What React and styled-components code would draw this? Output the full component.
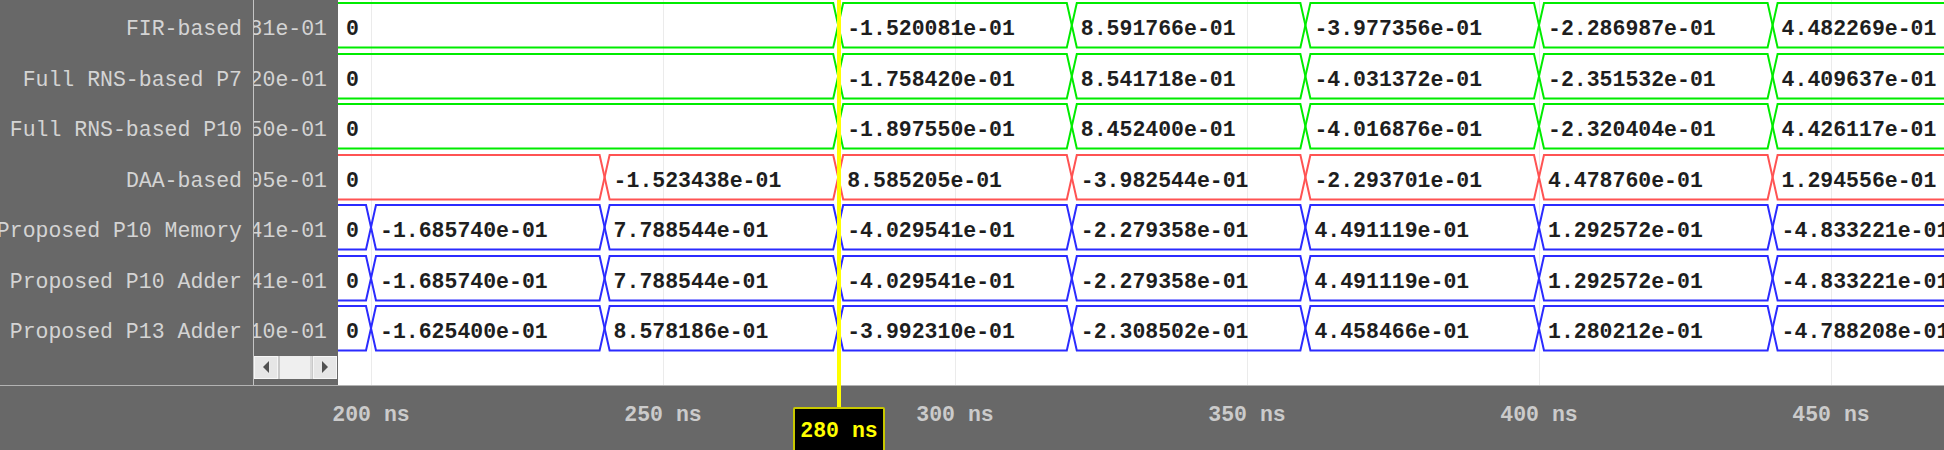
import styled, { createGlobalStyle } from "styled-components";

const PX_PER_NS = 5.84;
const T0 = 200; // ns of the first grid line
const T0_X = 33; // x of 200 ns inside the wave pane
const WAVE_LEFT = 338;
const ROW_H = 50.5;
const BUS_TOP = 1;
const BUS_BOTTOM = 45.5;
const HALF = 5;
const STEP = 40;
const CURSOR_T = 280;

const toX = (t) => T0_X + (t - T0) * PX_PER_NS;

const COLORS = {
  green: "#00ec00",
  red: "#ff5353",
  blue: "#2b2bff",
};

const signals = [
  {
    name: "FIR-based",
    color: "green",
    start: 280,
    values: ["-1.520081e-01", "8.591766e-01", "-3.977356e-01", "-2.286987e-01", "4.482269e-01"],
  },
  {
    name: "Full RNS-based P7",
    color: "green",
    start: 280,
    values: ["-1.758420e-01", "8.541718e-01", "-4.031372e-01", "-2.351532e-01", "4.409637e-01"],
  },
  {
    name: "Full RNS-based P10",
    color: "green",
    start: 280,
    values: ["-1.897550e-01", "8.452400e-01", "-4.016876e-01", "-2.320404e-01", "4.426117e-01"],
  },
  {
    name: "DAA-based",
    color: "red",
    start: 240,
    values: ["-1.523438e-01", "8.585205e-01", "-3.982544e-01", "-2.293701e-01", "4.478760e-01", "1.294556e-01"],
  },
  {
    name: "Proposed P10 Memory",
    color: "blue",
    start: 200,
    values: ["-1.685740e-01", "7.788544e-01", "-4.029541e-01", "-2.279358e-01", "4.491119e-01", "1.292572e-01", "-4.833221e-01"],
  },
  {
    name: "Proposed P10 Adder",
    color: "blue",
    start: 200,
    values: ["-1.685740e-01", "7.788544e-01", "-4.029541e-01", "-2.279358e-01", "4.491119e-01", "1.292572e-01", "-4.833221e-01"],
  },
  {
    name: "Proposed P13 Adder",
    color: "blue",
    start: 200,
    values: ["-1.625400e-01", "8.578186e-01", "-3.992310e-01", "-2.308502e-01", "4.458466e-01", "1.280212e-01", "-4.788208e-01"],
  },
];

const valueAt = (sig, t) => {
  if (t < sig.start) return "0";
  const i = Math.min(Math.floor((t - sig.start) / STEP), sig.values.length - 1);
  return sig.values[i];
};

const GlobalStyle = createGlobalStyle`
  html, body {
    margin: 0;
    padding: 0;
    background: #686868;
    overflow: hidden;
  }
`;

const Viewer = styled.div`
  position: relative;
  width: 1944px;
  height: 450px;
  display: flex;
  flex-direction: column;
  background: #686868;
  font-family: "Liberation Mono", "Courier New", monospace;
  overflow: hidden;
`;

const Panes = styled.div`
  display: flex;
  height: 385px;
  flex-shrink: 0;
`;

const NameColumn = styled.div`
  width: 253px;
  padding-top: 2px;
  border-right: 1px solid #c4c4c4;
`;

const ValueColumn = styled.div`
  width: 84px;
  padding-top: 2px;
  display: flex;
  flex-direction: column;
`;

const Label = styled.div`
  height: ${ROW_H}px;
  display: flex;
  align-items: center;
  justify-content: flex-end;
  padding: 4px 11px 0 0;
  box-sizing: border-box;
  color: #d4d4d4;
  font-size: 21.5px;
  white-space: nowrap;
  overflow: hidden;
`;

const ScrollBar = styled.div`
  height: 23px;
  display: flex;
  background: #c9c9c9;
  margin-right: 1px;
`;

const ScrollButton = styled.div`
  width: 24px;
  display: flex;
  align-items: center;
  justify-content: center;
  background: #e6e6e6;
  border: 1px solid #f6f6f6;
  box-sizing: border-box;
  margin-left: ${(p) => (p.$right ? "auto" : "0")};
`;

const Thumb = styled.div`
  width: 30px;
  margin-left: 2px;
  background: #efefef;
  border-right: 2px solid #d9d9d9;
`;

const WavePane = styled.div`
  flex: 1;
  padding-top: 2px;
  background-color: #fff;
  background-image: linear-gradient(to right, #ebebeb 1px, transparent 1px);
  background-size: ${50 * PX_PER_NS}px 100%;
  background-position: ${T0_X}px 0;
  overflow: hidden;
`;

const WaveRow = styled.svg`
  display: block;
  width: 100%;
  height: ${ROW_H}px;
  overflow: hidden;
`;

const WaveText = styled.text`
  font-family: "Liberation Mono", "Courier New", monospace;
  font-weight: bold;
  font-size: 21.5px;
  fill: #1e1e1e;
`;

const Ruler = styled.div`
  flex: 1;
  border-top: 1px solid #b3b3b3;
`;

const RulerSvg = styled.svg`
  display: block;
  width: 100%;
  height: 100%;
`;

const RulerText = styled.text`
  font-family: "Liberation Mono", "Courier New", monospace;
  font-weight: bold;
  font-size: 21.5px;
  fill: #cbcbcb;
`;

const CursorLine = styled.div`
  position: absolute;
  left: 837px;
  top: 0;
  width: 4px;
  height: 407px;
  background: #ffff00;
`;

const CursorBox = styled.div`
  position: absolute;
  left: 793px;
  top: 407px;
  width: 92px;
  height: 45px;
  box-sizing: border-box;
  padding-top: 2px;
  display: flex;
  align-items: center;
  justify-content: center;
  background: #000;
  border: 2px solid #c8c800;
  border-radius: 2px;
  color: #ffff00;
  font-weight: bold;
  font-size: 21.5px;
`;

const Arrow = ({ right }) => (
  <svg width="8" height="12" viewBox="0 0 8 12">
    <polygon points={right ? "1,0 7,6 1,12" : "7,0 1,6 7,12"} fill="#505050" />
  </svg>
);

const Bus = ({ sig }) => {
  const times = sig.values.map((_, i) => sig.start + i * STEP);
  const xs = times.map(toX);
  const end = 2000;
  let a = `M0 ${BUS_TOP}`;
  let b = `M0 ${BUS_BOTTOM}`;
  let aTop = true;
  xs.forEach((x) => {
    const ya = aTop ? BUS_TOP : BUS_BOTTOM;
    const yb = aTop ? BUS_BOTTOM : BUS_TOP;
    a += ` L${x - HALF} ${ya} L${x + HALF} ${yb}`;
    b += ` L${x - HALF} ${yb} L${x + HALF} ${ya}`;
    aTop = !aTop;
  });
  a += ` L${end} ${aTop ? BUS_TOP : BUS_BOTTOM}`;
  b += ` L${end} ${aTop ? BUS_BOTTOM : BUS_TOP}`;
  const color = COLORS[sig.color];
  return (
    <WaveRow>
      <path d={a} fill="none" stroke={color} strokeWidth="2" />
      <path d={b} fill="none" stroke={color} strokeWidth="2" />
      <WaveText x={8} y={33}>0</WaveText>
      {sig.values.map((v, i) => (
        <WaveText key={i} x={xs[i] + 9} y={33}>
          {v}
        </WaveText>
      ))}
    </WaveRow>
  );
};

const ticks = [200, 250, 300, 350, 400, 450];

export default function App() {
  return (
    <>
      <GlobalStyle />
      <Viewer>
        <Panes>
          <NameColumn>
            {signals.map((s) => (
              <Label key={s.name}>{s.name}</Label>
            ))}
          </NameColumn>
          <ValueColumn>
            {signals.map((s) => (
              <Label key={s.name}>
                <span>{valueAt(s, CURSOR_T)}</span>
              </Label>
            ))}
            <ScrollBar>
              <ScrollButton>
                <Arrow />
              </ScrollButton>
              <Thumb />
              <ScrollButton $right>
                <Arrow right />
              </ScrollButton>
            </ScrollBar>
          </ValueColumn>
          <WavePane>
            {signals.map((s) => (
              <Bus key={s.name} sig={s} />
            ))}
          </WavePane>
        </Panes>
        <Ruler>
          <RulerSvg>
            {ticks.map((t) => (
              <RulerText key={t} x={WAVE_LEFT + toX(t)} y={35} textAnchor="middle">
                {t} ns
              </RulerText>
            ))}
          </RulerSvg>
        </Ruler>
        <CursorLine />
        <CursorBox>{CURSOR_T} ns</CursorBox>
      </Viewer>
    </>
  );
}
